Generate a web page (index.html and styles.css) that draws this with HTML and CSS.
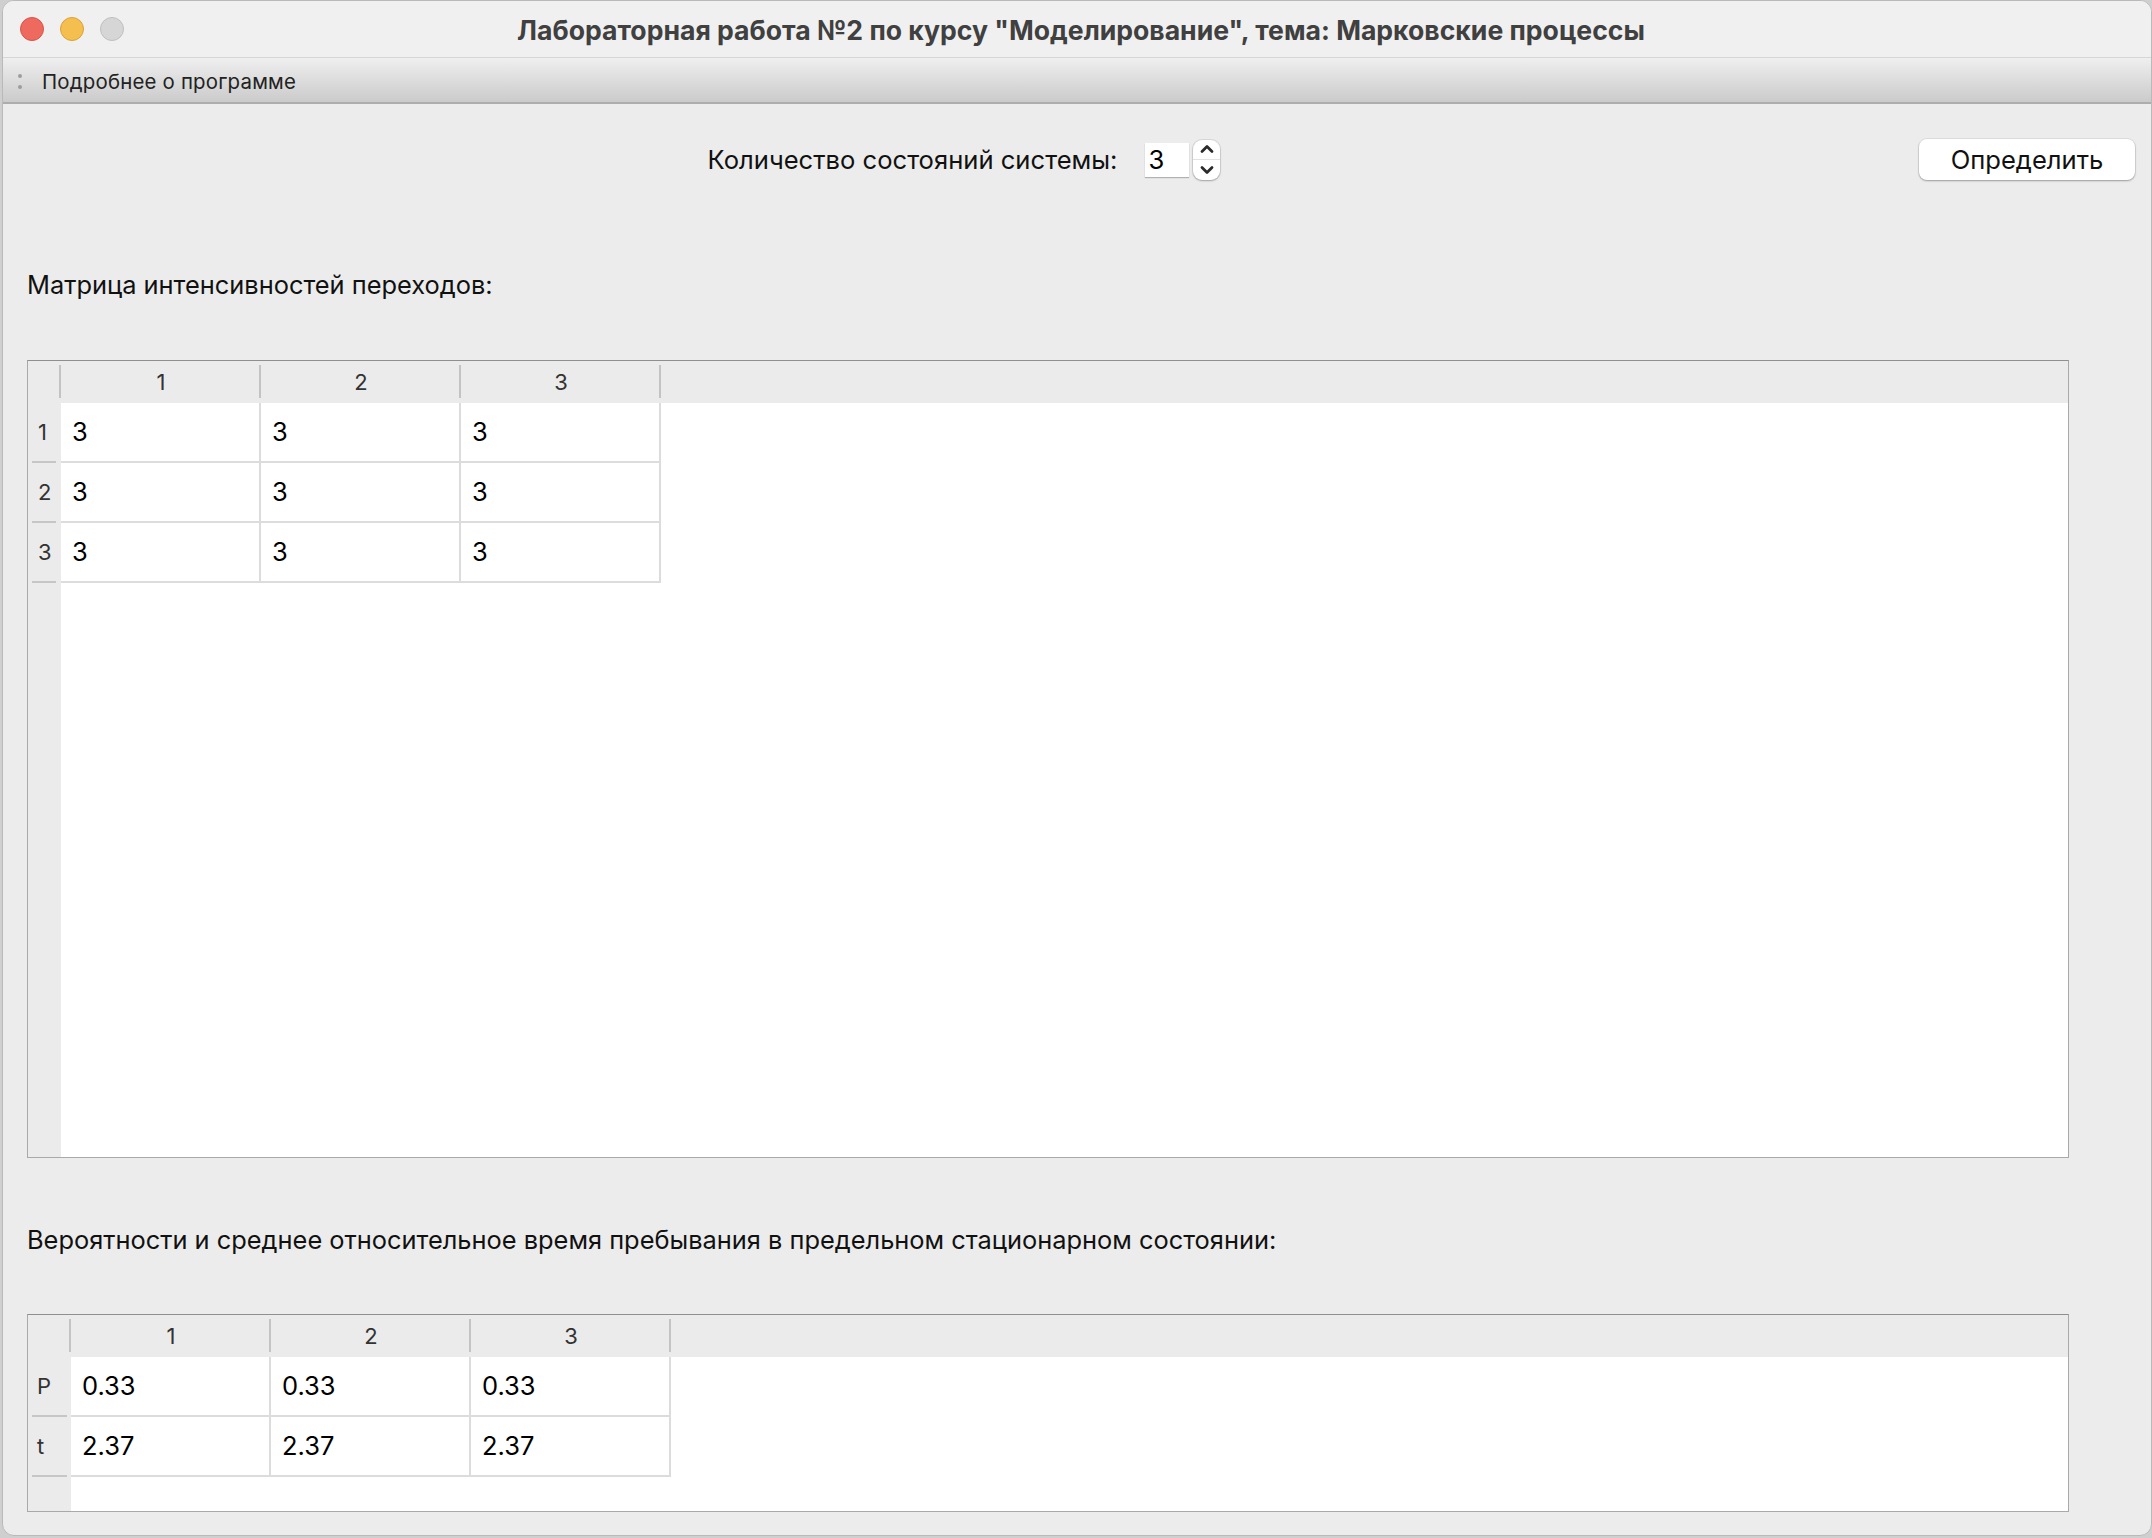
FILE: index.html
```html
<!DOCTYPE html>
<html lang="ru">
<head>
<meta charset="utf-8">
<title>Марковские процессы</title>
<link rel="stylesheet" href="styles.css">
</head>
<body>
<div class="window">
  <header class="titlebar">
    <div class="lights">
      <span class="light red"></span>
      <span class="light yellow"></span>
      <span class="light gray"></span>
    </div>
    <div class="title">Лабораторная работа №2 по курсу "Моделирование", тема: Марковские процессы</div>
    <div class="title-spacer"></div>
  </header>
  <div class="toolbar">
    <span class="grip"><i></i><i></i></span>
    <span class="tool">Подробнее о программе</span>
  </div>
  <main class="content">
    <div class="controls">
      <div class="states">
        <span class="label">Количество состояний системы:</span>
        <span class="spin">3</span>
        <span class="stepper">
          <span class="step up"><svg width="14" height="10" viewBox="0 0 14 10"><path d="M2 7.5 L7 2.5 L12 7.5" fill="none" stroke="#2b2b2b" stroke-width="2.8" stroke-linecap="round" stroke-linejoin="round"/></svg></span>
          <span class="step down"><svg width="14" height="10" viewBox="0 0 14 10"><path d="M2 2.5 L7 7.5 L12 2.5" fill="none" stroke="#2b2b2b" stroke-width="2.8" stroke-linecap="round" stroke-linejoin="round"/></svg></span>
        </span>
      </div>
      <button class="btn">Определить</button>
    </div>

    <div class="section-label label-matrix">Матрица интенсивностей переходов:</div>

    <div class="grid-table matrix">
      <div class="head-row">
        <div class="corner"></div>
        <div class="hcell">1</div>
        <div class="hcell">2</div>
        <div class="hcell">3</div>
      </div>
      <div class="body-area">
        <div class="vheader">
          <div class="vcell">1</div>
          <div class="vcell">2</div>
          <div class="vcell">3</div>
        </div>
        <div class="cells">
          <div class="row"><div class="cell">3</div><div class="cell">3</div><div class="cell">3</div></div>
          <div class="row"><div class="cell">3</div><div class="cell">3</div><div class="cell">3</div></div>
          <div class="row"><div class="cell">3</div><div class="cell">3</div><div class="cell">3</div></div>
        </div>
      </div>
    </div>

    <div class="section-label label-result">Вероятности и среднее относительное время пребывания в предельном стационарном состоянии:</div>

    <div class="grid-table result">
      <div class="head-row">
        <div class="corner"></div>
        <div class="hcell">1</div>
        <div class="hcell">2</div>
        <div class="hcell">3</div>
      </div>
      <div class="body-area">
        <div class="vheader">
          <div class="vcell">P</div>
          <div class="vcell">t</div>
        </div>
        <div class="cells">
          <div class="row"><div class="cell">0.33</div><div class="cell">0.33</div><div class="cell">0.33</div></div>
          <div class="row"><div class="cell">2.37</div><div class="cell">2.37</div><div class="cell">2.37</div></div>
        </div>
      </div>
    </div>
  </main>
</div>
</body>
</html>
```

FILE: styles.css
```css
* { box-sizing: border-box; }

html, body {
  margin: 0;
  padding: 0;
}

body {
  width: 2152px;
  height: 1538px;
  background: #cfcfcf;
  font-family: "Inter", "Roboto", "Liberation Sans", sans-serif;
  color: #111;
  overflow: hidden;
}

.window {
  margin-left: 2px;
  width: 2150px;
  height: 1536px;
  background: #ececec;
  border: 1px solid #b9b9b9;
  border-radius: 12px;
  overflow: hidden;
  display: flex;
  flex-direction: column;
}

/* ---------- title bar ---------- */
.titlebar {
  height: 57px;
  flex: 0 0 57px;
  background: #f0f0f0;
  border-bottom: 1px solid #d6d6d6;
  display: grid;
  grid-template-columns: 1fr auto 1fr;
  align-items: center;
}

.lights {
  display: flex;
  gap: 16px;
  padding-left: 17px;
}

.light {
  width: 24px;
  height: 24px;
  border-radius: 50%;
  display: block;
}
.light.red { background: #ee6a5e; border: 1px solid #d8534a; }
.light.yellow { background: #f5bf4f; border: 1px solid #d9a23b; }
.light.gray { background: #d6d6d6; border: 1px solid #bfbfbf; }

.title {
  font-weight: 700;
  font-size: 26.6px;
  color: #404040;
  white-space: nowrap;
  padding-top: 1px;
  padding-left: 8px;
}

/* ---------- toolbar ---------- */
.toolbar {
  height: 46px;
  flex: 0 0 46px;
  background: linear-gradient(#efefef, #d9d9d9 60%, #cbcbcb);
  border-bottom: 2px solid #adadad;
  display: flex;
  align-items: center;
  padding-left: 15px;
  padding-top: 3px;
}

.grip {
  display: flex;
  flex-direction: column;
  gap: 7px;
  width: 6px;
  margin-right: 18px;
}
.grip i {
  display: block;
  width: 4px;
  height: 4px;
  border-radius: 50%;
  background: #9d9d9d;
}

.tool {
  font-size: 20.4px;
  color: #222;
  letter-spacing: 0.2px;
}

/* ---------- content ---------- */
.content {
  flex: 1;
  padding: 35px 16px 0 24px;
  display: flex;
  flex-direction: column;
}

.controls {
  display: flex;
  align-items: center;
  height: 41px;
}

.states {
  flex: 1;
  display: flex;
  align-items: center;
  justify-content: center;
  padding-right: 18px;
}

.label {
  font-size: 25.6px;
  color: #111;
  margin-right: 28px;
}

.spin {
  width: 44px;
  height: 34px;
  background: #fff;
  box-shadow: 0 1px 1px rgba(0,0,0,0.25);
  font-size: 25.6px;
  line-height: 34px;
  padding-left: 3px;
  color: #000;
}

.stepper {
  margin-left: 4px;
  width: 27px;
  height: 40px;
  background: #fff;
  border-radius: 9px;
  box-shadow: 0 0 0 1px rgba(0,0,0,0.08), 0 1px 2px rgba(0,0,0,0.25);
  display: flex;
  flex-direction: column;
}
.step {
  flex: 1;
  display: flex;
  align-items: center;
  justify-content: center;
}
.step.up { border-bottom: 1px solid #e2e2e2; }

.btn {
  width: 216px;
  height: 41px;
  background: #fff;
  border: none;
  border-radius: 8px;
  box-shadow: 0 0 0 1px rgba(0,0,0,0.06), 0 1px 2px rgba(0,0,0,0.3);
  font-family: inherit;
  font-size: 25.6px;
  color: #111;
  padding: 0;
}

.section-label {
  font-size: 25.4px;
  line-height: 30px;
  color: #111;
}
.label-matrix { margin-top: 90px; }
.label-result { margin-top: 67px; }

/* ---------- tables ---------- */
.grid-table {
  width: 2042px;
  border: 1px solid #a9a9a9;
  border-top-color: #8f8f8f;
  display: flex;
  flex-direction: column;
  background: #fff;
}
.matrix { margin-top: 60px; height: 798px; }
.result { margin-top: 59px; height: 198px; }

.head-row {
  display: flex;
  height: 42px;
  flex: 0 0 42px;
  background: #ebebeb;
}

.corner, .hcell {
  position: relative;
}
.corner::after, .hcell::after {
  content: "";
  position: absolute;
  right: 0;
  top: 4px;
  bottom: 5px;
  width: 2px;
  background: #c3c3c3;
}

.matrix .corner { width: 33px; }
.result .corner { width: 43px; }

.hcell {
  width: 200px;
  text-align: center;
  font-size: 22px;
  line-height: 42px;
  color: #333;
}

.body-area {
  flex: 1;
  display: flex;
}

.vheader {
  background: #ebebeb;
  display: flex;
  flex-direction: column;
}
.matrix .vheader { width: 33px; }
.result .vheader { width: 43px; }

.vcell {
  height: 60px;
  position: relative;
  font-size: 22px;
  line-height: 58px;
  padding-left: 10px;
  color: #333;
}
.vcell::after {
  content: "";
  position: absolute;
  left: 4px;
  right: 5px;
  bottom: 0;
  height: 2px;
  background: #c6c6c6;
}
.result .vcell { padding-left: 9px; }
.result .vcell::after { right: 4px; }

.cells {
  display: flex;
  flex-direction: column;
}

.row {
  display: flex;
  height: 60px;
}

.cell {
  width: 200px;
  height: 60px;
  border-right: 2px solid #dcdcdc;
  border-bottom: 2px solid #dcdcdc;
  font-size: 25.5px;
  line-height: 58px;
  padding-left: 11px;
  color: #000;
}
```
